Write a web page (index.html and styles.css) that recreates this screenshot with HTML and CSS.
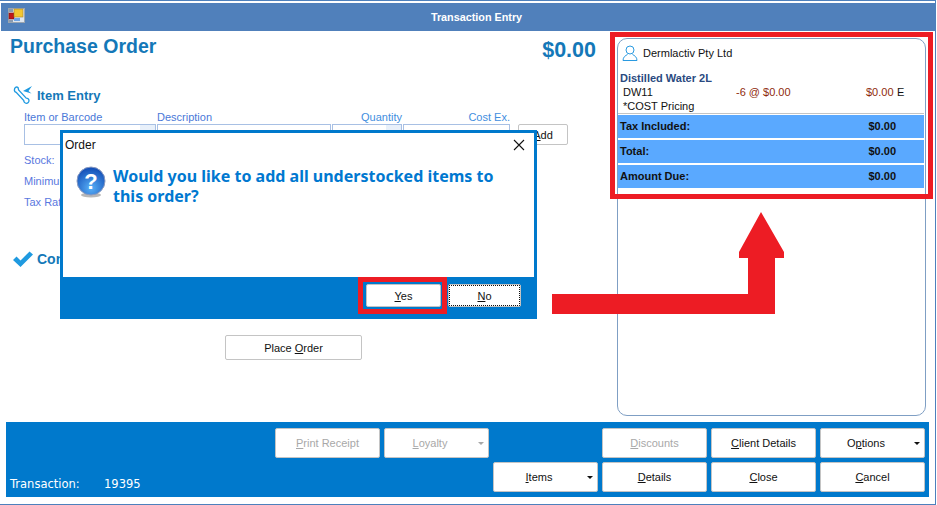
FILE: index.html
```html
<!DOCTYPE html>
<html lang="en">
<head>
  <meta charset="UTF-8">
  <title>Transaction Entry</title>
  <link rel="stylesheet" href="styles.css">
</head>
<body>
<div class="window">
  <div class="titlebar">
    <svg class="app-icon" width="17" height="15" viewBox="0 0 17 15">
      <rect x="0.5" y="0.5" width="16" height="14" fill="#dfe6ee" stroke="#9aa5b0"/>
      <rect x="1" y="5" width="5" height="6" fill="#c01818" stroke="#7a1010" stroke-width="0.6"/>
      <rect x="6" y="1" width="9" height="8" fill="#f3c730" stroke="#a8842a" stroke-width="0.6"/>
      <rect x="6" y="10" width="6" height="3" fill="#6fa4e4"/>
      <rect x="1" y="12" width="4" height="2" fill="#8a9bb0"/>
      <rect x="1" y="1" width="4" height="3" fill="#8a9bb0"/>
    </svg>
    <span class="title-text">Transaction Entry</span>
  </div>

  <div class="main">
    <div class="left">
      <div class="order-head">
        <h1>Purchase Order</h1>
        <div class="order-total">$0.00</div>
      </div>

      <div class="section-title item-title">
        <svg width="20" height="20" viewBox="0 0 20 20" fill="none">
          <path d="M1.500 4.500a2.200 2.200 0 0 1 3.500-2l.6 2.400 7.600 8.200a2.600 2.600 0 1 1-2.400 2.400L3.200 7.400a2.400 2.400 0 0 1-1.700-2.900z" stroke="#1f9ae0" stroke-width="1.300"/>
          <path d="M10 6l9-5-3.500 5 3 2.500z" fill="#1f9ae0"/>
        </svg>
        <span>Item Entry</span>
      </div>

      <div class="fields">
        <label class="field-label">Item or Barcode</label>
        <label class="field-label">Description</label>
        <label class="field-label right">Quantity</label>
        <label class="field-label right">Cost Ex.</label>
        <span></span>
        <div class="input combo"></div>
        <div class="input"></div>
        <div class="input combo"></div>
        <div class="input"></div>
        <button class="btn add-btn"><u>A</u>dd</button>
      </div>

      <div class="info">
        <div>Stock:</div>
        <div>Minimum:</div>
        <div>Tax Rate:</div>
      </div>

      <div class="section-title confirm-title">
        <svg width="20" height="16" viewBox="0 0 20 16">
          <path d="M0 9l3.500-3.500 4 4L16.500 0.500 20 3.500 7.500 16z" fill="#1f9ae0"/>
        </svg>
        <span>Confirm</span>
      </div>

      <div class="place-row">
        <button class="btn place-btn">Place <u>O</u>rder</button>
      </div>
    </div>

    <div class="panel">
      <div class="client">
        <svg width="16" height="16" viewBox="0 0 16 16" fill="none" stroke="#2a9ae0" stroke-width="1">
          <circle cx="8" cy="5" r="4"/>
          <path d="M1 15.500c0-3.500 2.500-5 4.500-6M15 15.500c0-3.500-2.500-5-4.500-6M1 15.500h14"/>
        </svg>
        <span>Dermlactiv Pty Ltd</span>
      </div>
      <div class="line-name">Distilled Water 2L</div>
      <div class="line-row">
        <span class="code">DW11</span>
        <span class="qty">-6 @ $0.00</span>
        <span class="amt">$0.00</span>
        <span class="tax">E</span>
      </div>
      <div class="line-note">*COST Pricing</div>
      <div class="totals">
        <div class="total-row"><span>Tax Included:</span><span>$0.00</span></div>
        <div class="total-row"><span>Total:</span><span>$0.00</span></div>
        <div class="total-row"><span>Amount Due:</span><span>$0.00</span></div>
      </div>
    </div>
  </div>

  <div class="footer">
    <div class="transaction"><span>Transaction:</span><span>19395</span></div>
    <div class="actions">
      <button class="btn off"><u>P</u>rint Receipt</button>
      <button class="btn off drop"><u>L</u>oyalty</button>
      <span></span>
      <button class="btn off"><u>D</u>iscounts</button>
      <button class="btn"><u>C</u>lient Details</button>
      <button class="btn drop">O<u>p</u>tions</button>
      <span></span>
      <span></span>
      <button class="btn drop"><u>I</u>tems</button>
      <button class="btn"><u>D</u>etails</button>
      <button class="btn"><u>C</u>lose</button>
      <button class="btn"><u>C</u>ancel</button>
    </div>
  </div>
</div>

<div class="dialog">
  <div class="dialog-body">
    <div class="dialog-head">
      <span>Order</span>
      <svg width="12" height="12" viewBox="0 0 12 12" stroke="#111" stroke-width="1.100">
        <path d="M1 1l10 10M11 1L1 11"/>
      </svg>
    </div>
    <div class="dialog-msg">
      <svg width="30" height="32" viewBox="0 0 30 32">
        <defs>
          <radialGradient id="qfill" cx="50%" cy="75%" r="70%">
            <stop offset="0" stop-color="#58b0f8"/>
            <stop offset="1" stop-color="#1450b8"/>
          </radialGradient>
        </defs>
        <ellipse cx="15" cy="29" rx="10" ry="2.500" fill="#b8b8b8"/>
        <circle cx="15" cy="15" r="14" fill="url(#qfill)" stroke="#8a9ac0"/>
        <text x="15" y="23" text-anchor="middle" class="q-mark">?</text>
      </svg>
      <p>Would you like to add all understocked items to this order?</p>
    </div>
  </div>
  <div class="dialog-foot">
    <button class="btn dlg-btn"><u>Y</u>es</button>
    <button class="btn dlg-btn focus"><u>N</u>o</button>
  </div>
</div>

<div class="red-box summary-box"></div>
<div class="red-box yes-box"></div>
<svg class="red-arrow" width="233" height="103" viewBox="0 0 233 103">
  <path d="M0 103V83H196V47H187V41L209 1 232 41V47H223V103Z" fill="#ed1c24"/>
</svg>
</body>
</html>
```

FILE: styles.css
```css
body {
  margin: 0;
  background: #fff;
  font-family: "Liberation Sans", Arial, sans-serif;
  font-size: 11px;
  color: #111;
  overflow: hidden;
}
.window {
  position: relative;
  box-sizing: border-box;
  width: 936px;
  height: 505px;
  padding: 2px 0 0 1px;
  border-top: 1px solid #4d80bc;
  border-right: 1px solid #4d80bc;
  border-bottom: 1px solid #4d80bc;
  display: flex;
  flex-direction: column;
}
.titlebar {
  height: 28px;
  flex: none;
  background: #5080bb;
  position: relative;
  display: flex;
  align-items: center;
  justify-content: center;
}
.app-icon {
  position: absolute;
  left: 7px;
  top: 5px;
}
.title-text {
  color: #fff;
  font-weight: bold;
  font-size: 10.8px;
  margin-left: 17px;
}
.main {
  flex: 1;
  display: flex;
  min-height: 0;
}
.left {
  width: 595px;
  flex: none;
}
.order-head {
  display: flex;
  justify-content: space-between;
  padding: 4px 0 0 9px;
  height: 44px;
}
h1 {
  margin: 0;
  font-size: 19.5px;
  color: #1478b8;
  font-weight: bold;
  line-height: 22px;
}
.order-total {
  font-size: 21.5px;
  font-weight: bold;
  color: #1478b8;
  line-height: 24px;
  margin-top: 3px;
}
.section-title {
  display: flex;
  align-items: center;
  gap: 4px;
  padding-left: 12px;
  font-weight: bold;
  font-size: 13px;
  color: #1478b8;
}
.item-title {
  margin-top: 4px;
  height: 24px;
}
.fields {
  display: grid;
  grid-template-columns: 133px 175px 71px 108px 57px;
  grid-template-rows: 14px 21px;
  padding-left: 23px;
  margin-top: 3px;
}
.field-label {
  color: #4a78d8;
  line-height: 14px;
}
.field-label.right {
  text-align: right;
  color: #3f8ee0;
  padding-right: 1px;
}
.input {
  border: 1px solid #a8c0e4;
  margin-right: 1px;
  background: #fff;
  position: relative;
}
.input.combo::after {
  content: "";
  position: absolute;
  right: 0;
  top: 0;
  width: 15px;
  height: 100%;
  background: #e8f0fa;
}
.add-btn {
  margin-left: 7px;
}
.info {
  padding: 5px 0 0 23px;
  color: #5a78e0;
  line-height: 21px;
}
.confirm-title {
  margin-top: 36px;
  font-size: 14px;
  height: 20px;
}
.place-row {
  padding: 66px 0 0 224px;
}
.place-btn {
  display: block;
  width: 137px;
  height: 25px;
}
.btn {
  box-sizing: border-box;
  border: 1px solid #c4c4c4;
  border-radius: 2px;
  background: #fff;
  font-family: "Liberation Sans", Arial, sans-serif;
  font-size: 11px;
  color: #111;
  padding: 0;
  position: relative;
}
.btn.off {
  color: #a8a8a8;
}
.btn.drop {
  padding-right: 13px;
}
.btn.drop::after {
  content: "";
  position: absolute;
  right: 4px;
  top: 50%;
  margin-top: -1px;
  border: 3px solid transparent;
  border-top: 3px solid #111;
  border-bottom: 0;
}
.btn.off.drop::after {
  border-top-color: #a8a8a8;
}
.panel {
  box-sizing: border-box;
  margin: 7px 0 6px 21px;
  width: 309px;
  border: 1px solid #7f9fc4;
  border-radius: 10px;
  padding: 0 1px 0 0;
}
.client {
  display: flex;
  align-items: center;
  gap: 5px;
  padding: 5px 0 0 4px;
  height: 17px;
}
.line-name {
  margin: 10px 0 0 2px;
  font-weight: bold;
  color: #2a4a80;
  line-height: 14px;
}
.line-row {
  display: grid;
  grid-template-columns: 113px 130px 31px auto;
  padding-left: 5px;
  line-height: 13px;
  margin-top: 1px;
}
.qty, .amt {
  color: #8f2a0c;
}
.line-note {
  padding-left: 5px;
  line-height: 13px;
  margin-top: 1px;
}
.totals {
  border-top: 1px solid #c4c4c4;
  padding-top: 1px;
}
.total-row {
  box-sizing: border-box;
  display: flex;
  justify-content: space-between;
  align-items: center;
  height: 23px;
  margin-bottom: 2px;
  background: #5aa9ff;
  font-weight: bold;
  padding: 0 28px 2px 2px;
}
.footer {
  position: relative;
  flex: none;
  height: 75px;
  margin: 0 6px 7px 5px;
  background: #0079cc;
}
.transaction {
  position: absolute;
  left: 4px;
  top: 55px;
  display: flex;
  color: #fff;
  font-family: "DejaVu Sans", sans-serif;
  font-size: 11.500px;
}
.transaction span:first-child {
  width: 94px;
}
.actions {
  position: absolute;
  right: 4px;
  top: 6px;
  display: grid;
  grid-template-columns: repeat(6, 105px);
  grid-auto-rows: 30px;
  gap: 4px;
}
.dialog {
  position: absolute;
  left: 60px;
  top: 130px;
  width: 477px;
  height: 189px;
  box-sizing: border-box;
  border: 3px solid #0079cc;
  background: #0079cc;
  display: flex;
  flex-direction: column;
}
.dialog-body {
  height: 144px;
  flex: none;
  background: #fff;
}
.dialog-head {
  display: flex;
  justify-content: space-between;
  align-items: center;
  padding: 3px 9px 0 2px;
  height: 18px;
  font-size: 12px;
}
.dialog-msg {
  display: flex;
  gap: 7px;
  padding: 12px 0 0 13px;
}
.dialog-msg p {
  margin: 0;
  width: 410px;
  font-family: "Noto Sans", sans-serif;
  font-weight: bold;
  font-size: 16px;
  line-height: 20px;
  color: #0078d0;
}
.q-mark {
  fill: #fff;
  font-family: "Liberation Sans", sans-serif;
  font-weight: bold;
  font-size: 22px;
}
.dialog-foot {
  display: flex;
  gap: 7px;
  padding: 7px 0 0 303px;
}
.dlg-btn {
  width: 75px;
  height: 23px;
}
.dlg-btn.focus {
  width: 73px;
  outline: 1px dotted #111;
  outline-offset: -2px;
}
.red-box {
  position: absolute;
  box-sizing: border-box;
  border: 5px solid #ed1c24;
}
.summary-box {
  left: 610px;
  top: 32px;
  width: 323px;
  height: 167px;
}
.yes-box {
  left: 358px;
  top: 277px;
  width: 89px;
  height: 37px;
}
.red-arrow {
  position: absolute;
  left: 552px;
  top: 211px;
}
```
